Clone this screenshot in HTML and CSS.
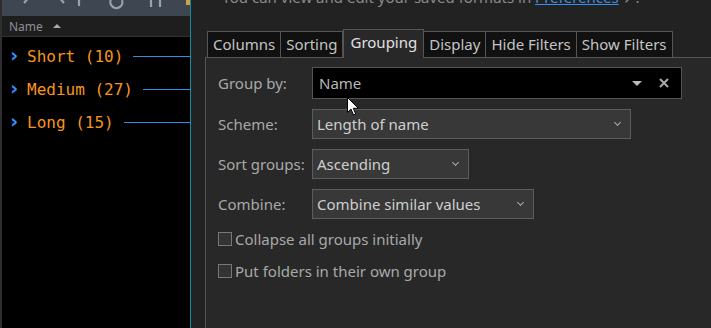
FILE: index.html
```html
<!DOCTYPE html>
<html lang="en">
<head>
    <meta charset="UTF-8">
    <title>Grouping</title>
    <link rel="stylesheet" href="styles.css">
</head>
<body>

<div class="app">
    <!-- left file list -->
    <div class="listPane">
        <div class="toolbar">
            <svg class="tIcon" width="180" height="16" viewBox="0 0 180 16">
                <g fill="none" stroke="#98a2ac" stroke-width="2.2">
                    <path d="M28 -4l-6 7"/>
                    <path d="M56 -4l6 7"/>
                    <path d="M77 -2v8"/>
                    <path d="M110 -2a6 6 0 1 0 10 2"/>
                    <path d="M149 -2v9M158 -2v9"/>
                </g>
            </svg>
            <span class="gold"></span>
        </div>
        <div class="colHead">
            <span>Name</span>
            <span class="sortUp"></span>
        </div>
        <div class="groups">
            <div class="grp"><span class="chev">&#x203A;</span><span class="gName">Short (10)</span><span class="gLine"></span></div>
            <div class="grp"><span class="chev">&#x203A;</span><span class="gName">Medium (27)</span><span class="gLine"></span></div>
            <div class="grp"><span class="chev">&#x203A;</span><span class="gName">Long (15)</span><span class="gLine"></span></div>
        </div>
    </div>

    <div class="split"></div>

    <!-- right settings -->
    <div class="setPane">
        <p class="intro">You can view and edit your saved formats in <a href="#">Preferences</a> &#x2197;.</p>

        <div class="tabs">
            <div class="tab">Columns</div>
            <div class="tab">Sorting</div>
            <div class="tab active">Grouping</div>
            <div class="tab">Display</div>
            <div class="tab">Hide Filters</div>
            <div class="tab">Show Filters</div>
        </div>

        <div class="panel">
            <div class="row">
                <label>Group by:</label>
                <div class="combo">
                    <span>Name</span>
                    <span class="comboBtns">
                        <svg width="12" height="7" viewBox="0 0 12 7"><path d="M1 1h10l-5 5z" fill="#bbb"/></svg>
                        <svg width="10" height="10" viewBox="0 0 10 10"><path d="M1 1l8 8M9 1l-8 8" stroke="#aaa" stroke-width="2"/></svg>
                    </span>
                </div>
            </div>
            <div class="row">
                <label>Scheme:</label>
                <div class="sel wScheme"><span>Length of name</span><span class="arr"></span></div>
            </div>
            <div class="row">
                <label>Sort groups:</label>
                <div class="sel wSort"><span>Ascending</span><span class="arr"></span></div>
            </div>
            <div class="row">
                <label>Combine:</label>
                <div class="sel wComb"><span>Combine similar values</span><span class="arr"></span></div>
            </div>
            <div class="chk"><span class="box"></span>Collapse all groups initially</div>
            <div class="chk"><span class="box"></span>Put folders in their own group</div>
        </div>
    </div>
</div>

<!-- mouse pointer -->
<svg class="cursor" width="12" height="19" viewBox="0 0 12 19">
    <path d="M0.5 0.5v15l3.5-3.5 2.5 6 2.2-1-2.4-5.7h5z" fill="#fff" stroke="#000" stroke-width="1"/>
</svg>

</body>
</html>
```

FILE: styles.css
```css
* {
    box-sizing: border-box;
}

body {
    margin: 0;
    background: #222;
    font-family: "Noto Sans", "Open Sans", sans-serif;
    overflow: hidden;
}

.app {
    display: flex;
    height: 328px;
}

.listPane {
    width: 190px;
    background: #000;
    border-left: 2px solid #2e2e2e;
    display: flex;
    flex-direction: column;
}

.toolbar {
    height: 16px;
    background: #3d4651;
    display: flex;
    overflow: hidden;
}

.tIcon {
    flex: none;
}

.gold {
    width: 4px;
    height: 5px;
    background: #c9a24a;
    margin-left: auto;
}

.colHead {
    height: 21px;
    background: #1e1e1e;
    border-bottom: 1px solid #333;
    color: #8b9096;
    font-size: 12px;
    display: flex;
    align-items: center;
    padding-left: 7px;
    gap: 10px;
}

.sortUp {
    width: 0;
    height: 0;
    border-left: 4px solid transparent;
    border-right: 4px solid transparent;
    border-bottom: 4px solid #aaa;
}

.groups {
    padding-top: 3px;
}

.grp {
    height: 33px;
    display: flex;
    align-items: center;
    font-family: "DejaVu Sans Mono", monospace;
    font-size: 16px;
}

.chev {
    color: #3794ff;
    font-weight: bold;
    font-size: 20px;
    width: 25px;
    padding-left: 6px;
    margin-top: -4px;
}

.gName {
    color: #f7941d;
}

.gLine {
    flex: 1;
    height: 1px;
    background: #2f8fe0;
    margin-left: 10px;
    margin-top: -1px;
}

.split {
    width: 1px;
    background: #178c9c;
}

.setPane {
    flex: 1;
    padding-left: 14px;
    display: flex;
    flex-direction: column;
    min-width: 0;
}

.intro {
    margin: -12px 0 0 17px;
    color: #8a8a8a;
    font-size: 15px;
    white-space: nowrap;
    line-height: 18px;
}

.intro a {
    color: #3b8eea;
}

.tabs {
    display: flex;
    align-items: flex-end;
    margin: 23px 0 0 2px;
    height: 28px;
}

.tab {
    height: 26px;
    padding: 0 5px;
    background: #111;
    border: 1px solid #555;
    border-bottom: none;
    border-left: none;
    color: #c4c4c4;
    font-size: 15px;
    line-height: 24px;
}

.tab:first-child {
    border-left: 1px solid #555;
}

.tab.active {
    height: 29px;
    background: #282828;
    border-left: 1px solid #555;
    color: #e0e0e0;
    padding: 0 6px;
    margin-bottom: -1px;
    position: relative;
}

.panel {
    flex: 1;
    background: #282828;
    border-top: 1px solid #555;
    border-left: 1px solid #555;
    padding: 9px 0 0 12px;
    color: #a8a8a8;
    font-size: 15px;
}

.row {
    display: flex;
    align-items: center;
    margin-bottom: 10px;
}

.row label {
    width: 94px;
}

.combo {
    width: 370px;
    height: 32px;
    background: #000;
    border: 1px solid #555;
    display: flex;
    align-items: center;
    padding: 0 12px 0 6px;
    color: #b8b8b8;
}

.comboBtns {
    margin-left: auto;
    display: flex;
    align-items: center;
    gap: 16px;
}

.sel {
    height: 30px;
    background: #383838;
    border: 1px solid #5c5c5c;
    display: flex;
    align-items: center;
    padding: 0 10px 0 4px;
    color: #cfcfcf;
}

.wScheme { width: 319px; }
.wSort { width: 157px; }
.wComb { width: 222px; }

.arr {
    margin-left: auto;
    width: 5px;
    height: 5px;
    border-right: 1px solid #aaa;
    border-bottom: 1px solid #aaa;
    transform: rotate(45deg);
    margin-top: -3px;
}

.chk {
    display: flex;
    align-items: center;
    height: 20px;
    margin-bottom: 12px;
    color: #a8a8a8;
}

.chk:first-of-type {
    margin-top: 11px;
}

.box {
    width: 14px;
    height: 14px;
    background: #333;
    border: 1px solid #777;
    margin-right: 3px;
}

.cursor {
    position: absolute;
    left: 347px;
    top: 97px;
}
```
